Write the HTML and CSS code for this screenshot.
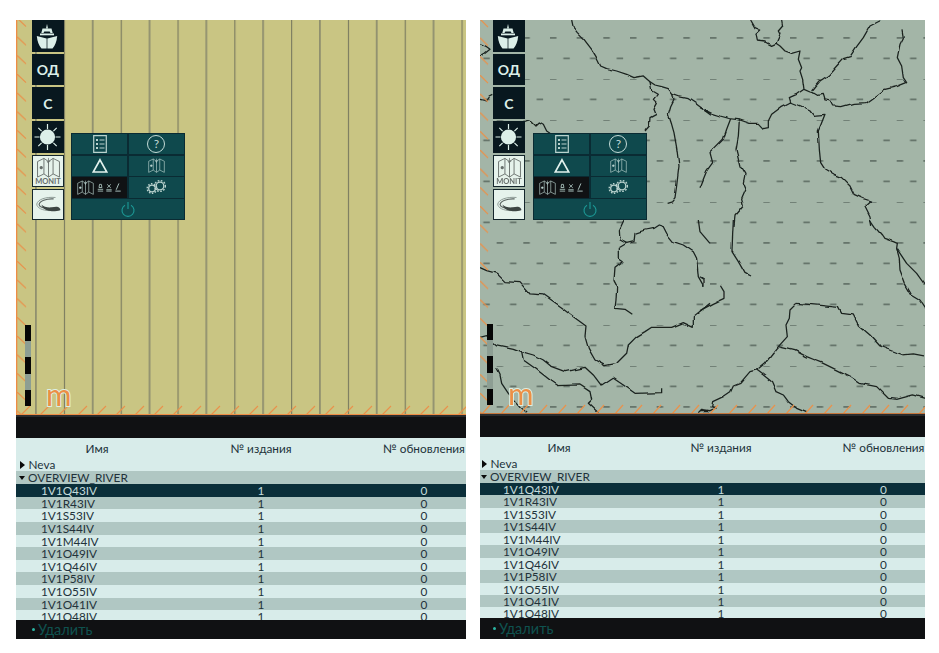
FILE: index.html
```html
<!DOCTYPE html>
<html>
<head>
<title>Monitoring</title>
<link rel="stylesheet" href="styles.css">
</head>
<body>
<!-- shared icons -->
<svg class="defs">
    <symbol id="icoShip" viewBox="0 0 32 32">
        <path d="M14 8.500l1-4.500 1 4.500z" fill="currentColor"/>
        <path d="M10.500 8.500h9l1.200 4.500h-2.200l-.8-1.600h-5.400l-.8 1.600H9.300z" fill="currentColor"/>
        <path d="M8 13.500h14v1.800H8z" fill="currentColor"/>
        <path d="M4.800 16l9.800 2.600v10H9.500Q5.500 24 4.800 16z" fill="currentColor"/>
        <path d="M25.200 16l-9.800 2.600v10h5.100Q24.500 24 25.200 16z" fill="currentColor"/>
    </symbol>
    <symbol id="icoSun" viewBox="0 0 32 32">
        <circle cx="15.500" cy="16" r="7.600" fill="currentColor"/>
        <path d="M15.500 3v5M15.500 24v5M2.500 16h5M23.500 16h5M6.300 6.800l3.300 3.300M21.400 21.900l3.300 3.300M24.700 6.800l-3.300 3.300M9.600 21.900l-3.300 3.300" stroke="currentColor" stroke-width="1.200" fill="none"/>
    </symbol>
    <symbol id="icoMap" viewBox="0 0 26 23">
        <path d="M1 5l7-3.500 5 3.500 5-3.500 7 3.500v17l-7-3.500-5 3.500-5-3.500-7 3.500z M8 1.500v17 M13 5v17 M18 1.500v17" fill="none" stroke="currentColor" stroke-width="1"/>
        <path d="M5 13.500a1.800 1.800 0 1 1 .1 0l-1.800 3.500z" fill="currentColor"/>
        <path d="M13 1v6l-1.500-2h3l-1.500-2" fill="none" stroke="currentColor" stroke-width=".8"/>
    </symbol>
    <symbol id="icoCurve" viewBox="0 0 32 32">
        <path d="M24 8C14 7 5 10 4 15c0 4 6 7 14 7" fill="none" stroke="#8a9792" stroke-width="1"/>
        <path d="M22 9.500C14 9 7 12 6.500 15.500c.5 2.500 5 4.500 11 4.500" fill="none" stroke="#5a6461" stroke-width="1.200"/>
        <path d="M9 15.500c2 2.500 7 3.500 11 3 3-.5 6-1.500 8 .5 1 1 1.500 2 1 2.500-3 1-7 1.500-10.500 1-5-.5-8.500-3-9.500-7z" fill="#3d4643"/>
    </symbol>
    <symbol id="icoList" viewBox="0 0 14 18">
        <path d="M.7.7h12.600v16.600H.7z" fill="none" stroke="currentColor" stroke-width="1.200"/>
        <path d="M3 4h2v2H3zM3 8h2v2H3zM3 12h2v2H3zM6.500 4.500h5v1h-5zM6.500 8.500h5v1h-5zM6.500 12.500h5v1h-5z" fill="currentColor"/>
    </symbol>
    <symbol id="icoTriangle" viewBox="0 0 16 15">
        <path d="M8 1.800L14.800 14H1.200z" fill="none" stroke="currentColor" stroke-width="1.700"/>
    </symbol>
    <symbol id="icoGears" viewBox="0 0 20 14">
        <circle cx="6" cy="8.500" r="3.300" fill="none" stroke="currentColor" stroke-width="1.300"/>
        <circle cx="6" cy="8.500" r="4.800" fill="none" stroke="currentColor" stroke-width="1.400" stroke-dasharray="1.500 1.500"/>
        <circle cx="14" cy="6" r="3.800" fill="none" stroke="currentColor" stroke-width="1.300"/>
        <circle cx="14" cy="6" r="5.400" fill="none" stroke="currentColor" stroke-width="1.400" stroke-dasharray="1.700 1.500"/>
    </symbol>
    <symbol id="icoTools" viewBox="0 0 26 10">
        <path d="M2.500 1.500h2l.6 3.500H1.900zM.5 7h6M.5 9h6" fill="none" stroke="currentColor" stroke-width=".9"/>
        <path d="M11 1.500l4 4M15 1.500l-4 4M10 7.500h6M10 9h6" fill="none" stroke="currentColor" stroke-width=".9"/>
        <path d="M24 .5l-3 7M20 9h6" fill="none" stroke="currentColor" stroke-width="1"/>
    </symbol>
</svg>

<div class="panel panelLeft">
    <div class="map">
        <svg class="mapPic" viewBox="16 20 450 395">
            <defs>
                <pattern id="gridL" patternUnits="userSpaceOnUse" x="35" y="0" width="56.800" height="40">
                    <rect x="0" y="0" width="1.800" height="40" fill="#90906f"/>
                    <rect x="29" y="0" width="1" height="40" fill="#70715b"/>
                </pattern>
                <pattern id="sideL" patternUnits="userSpaceOnUse" x="16" y="18" width="12" height="18.700">
                    <path d="M1 0l9 8.500" stroke="#e8924c" stroke-width="1.300"/>
                </pattern>
                <pattern id="footL" patternUnits="userSpaceOnUse" x="1" y="405" width="19" height="10">
                    <path d="M1 10l9-9" stroke="#e8924c" stroke-width="1.300"/>
                </pattern>
            </defs>
            <rect x="16" y="20" width="450" height="395" fill="url(#gridL)"/>
            <rect x="16" y="20" width="12" height="395" fill="url(#sideL)"/>
            <rect x="16" y="405" width="450" height="10" fill="url(#footL)"/>
            <rect x="16" y="20" width="1.300" height="395" fill="#ee8d45"/>
            <rect x="16" y="414" width="450" height="1.200" fill="#ee8d45"/>
        </svg>
        <div class="sideBar">
            <div class="sideBtn"><svg class="ico32"><use href="#icoShip"/></svg></div>
            <div class="sideBtn">ОД</div>
            <div class="sideBtn">С</div>
            <div class="sideBtn"><svg class="ico32"><use href="#icoSun"/></svg></div>
            <div class="sideBtn sideBtnPale"><svg class="icoMonit"><use href="#icoMap"/></svg><span class="monitLbl">MONIT</span></div>
            <div class="sideBtn sideBtnPale"><svg class="ico32"><use href="#icoCurve"/></svg></div>
        </div>
        <div class="popMenu">
            <div class="popCell"><svg class="icoList"><use href="#icoList"/></svg></div>
            <div class="popCell"><span class="qMark">?</span></div>
            <div class="popCell"><svg class="icoTriangle"><use href="#icoTriangle"/></svg></div>
            <div class="popCell"><svg class="icoMapSm"><use href="#icoMap"/></svg></div>
            <div class="popCell popCellBlack"><svg class="icoMapSm"><use href="#icoMap"/></svg><svg class="icoTools"><use href="#icoTools"/></svg></div>
            <div class="popCell"><svg class="icoGears"><use href="#icoGears"/></svg></div>
            <div class="popCell popCellWide"><svg class="icoPower" viewBox="0 0 14 16"><path d="M4 4.200a6 6 0 1 0 6 0M7 1v7" fill="none" stroke="currentColor" stroke-width="1.100"/></svg></div>
        </div>
        <div class="scaleBar"><i></i><i></i><i></i><i></i><i></i></div>
        <div class="logoM">m</div>
    </div>
    <div class="blackBar"></div>
    <div class="listBox">
        <div class="row rowHead"><span>Имя</span><span>№ издания</span><span>№ обновления</span></div>
        <div class="row rowGroup"><span class="arrowR"></span>Neva</div>
        <div class="row rowGroup rowDark"><span class="arrowD"></span>OVERVIEW_RIVER</div>
        <div class="row rowSel"><span>1V1Q43IV</span><span>1</span><span>0</span></div>
        <div class="row rowDark"><span>1V1R43IV</span><span>1</span><span>0</span></div>
        <div class="row"><span>1V1S53IV</span><span>1</span><span>0</span></div>
        <div class="row rowDark"><span>1V1S44IV</span><span>1</span><span>0</span></div>
        <div class="row"><span>1V1M44IV</span><span>1</span><span>0</span></div>
        <div class="row rowDark"><span>1V1O49IV</span><span>1</span><span>0</span></div>
        <div class="row"><span>1V1Q46IV</span><span>1</span><span>0</span></div>
        <div class="row rowDark"><span>1V1P58IV</span><span>1</span><span>0</span></div>
        <div class="row"><span>1V1O55IV</span><span>1</span><span>0</span></div>
        <div class="row rowDark"><span>1V1O41IV</span><span>1</span><span>0</span></div>
        <div class="row"><span>1V1O48IV</span><span>1</span><span>0</span></div>
    </div>
    <div class="footBar"><span class="footDot"></span>Удалить</div>
</div>

<div class="panel panelRight">
    <div class="map">
        <svg class="mapPic" viewBox="480 20 445 394">
            <defs>
                <pattern id="dash" patternUnits="userSpaceOnUse" x="710" y="37" width="26.670" height="41">
                    <rect x="0" y="0" width="6.500" height="1.800" fill="#66756b"/>
                    <rect x="13.330" y="20.500" width="6.500" height="1.800" fill="#66756b"/>
                </pattern>
                <pattern id="sideR" patternUnits="userSpaceOnUse" x="480" y="19" width="10" height="18.700">
                    <path d="M0 0l8 8" stroke="#e8924c" stroke-width="1.300"/>
                </pattern>
                <pattern id="footR" patternUnits="userSpaceOnUse" x="482" y="404" width="19" height="10">
                    <path d="M0 10l8-9" stroke="#e8924c" stroke-width="1.300"/>
                </pattern>
                <filter id="wobble" filterUnits="userSpaceOnUse" x="480" y="20" width="445" height="394">
                    <feTurbulence type="fractalNoise" baseFrequency=".09" numOctaves="1" seed="4" result="noise"/>
                    <feDisplacementMap in="SourceGraphic" in2="noise" scale="4" xChannelSelector="R" yChannelSelector="G"/>
                </filter>
            </defs>
            <rect x="480" y="20" width="445" height="394" fill="url(#dash)"/>
            <g class="rivers" filter="url(#wobble)">
                <g transform="translate(480 16) scale(.3333)">
                    <path d="M275 12L280 35 292 50 312 70 335 100 350 125 362 150 380 158 410 165 440 175 462 185 490 180 510 197 525 207 545 212 565 218 578 235 582 250 572 270 565 295 575 325 582 350 590 395 597 450 590 510 585 545 575 558 560 562"/>
                    <path d="M510 197L515 225 532 235 520 250 532 262 522 280 528 295 510 305 508 330 495 345"/>
                    <path d="M578 235L600 243 625 248 650 265 670 280 690 295"/>
                    <path d="M0 83L20 92 30 100 15 112 0 120"/>
                    <path d="M0 250L20 255 30 240 40 235"/>
                    <path d="M135 320L150 315 165 330 178 318 190 325 200 345 210 352"/>
                </g>
                <g transform="translate(700 16) scale(.3333)">
                    <path d="M152 12L165 35 182 42 168 55 172 75 195 78 215 88 228 82 240 90 255 105 275 112 300 105 295 130 305 155 300 165 308 190 312 220 330 228 345 232 355 238 370 235 375 252 390 255 398 270 425 272 460 262 500 260 525 242 555 220 590 212 620 200 610 185 605 150 592 125 600 85 610 65 606 40"/>
                    <path d="M245 12L248 30 235 45 240 55 228 82"/>
                    <path d="M312 220L290 235 268 245 272 258 245 272 215 295 205 315 205 335 190 338 175 322 150 322 120 312 90 308 60 300 35 292 10 280 0 275"/>
                    <path d="M270 258L300 270 330 285 340 298 375 295 365 320 355 345 358 400 362 440 375 460 400 475 425 485 450 510 462 535 490 548 512 555 495 570 510 600 515 630"/>
                    <path d="M335 225L360 195 385 178 410 150 430 128 450 122 470 92 490 65 510 30 545 12"/>
                    <path d="M92 308L80 340 70 370 45 395 30 410 38 440 20 465 10 490 0 515"/>
                    <path d="M118 312L115 360 108 400 120 450 135 475 130 500 138 520 125 550 130 570 105 600 102 630"/>
                </g>
                <g transform="translate(480 220) scale(.3333)">
                    <path d="M432 0L418 30 420 60 440 70 415 85 415 115 430 125 405 145 402 185 410 200 408 240 405 265 435 268 457 283"/>
                    <path d="M440 70L462 65 465 40 495 30 520 25 535 15 550 20 560 40 580 65 610 75 640 95 650 115 655 170 672 200"/>
                    <path d="M0 143L20 152 50 160 75 185 120 188 150 222 190 225 240 260 280 290 318 318 315 350 325 385 345 420 375 437 410 430 440 400 445 375 470 350 495 335 515 322 575 322 610 308 640 322 640 290 690 250"/>
                    <path d="M0 355L20 350 50 375 100 385 125 395 160 405 190 420 215 440 255 455 315 442 340 465 365 498 400 475 430 495 465 520 545 518 545 505"/>
                    <path d="M125 395L130 420 165 445 210 480 235 497 300 495 330 515 335 540 325 550 355 578"/>
                    <path d="M50 445L60 465 65 490 85 520 120 560 140 578"/>
                    <path d="M655 578L665 568 690 572"/>
                    <path d="M655 0L660 35 690 70"/>
                </g>
                <g transform="translate(700 220) scale(.3333)">
                    <path d="M100 0L98 40 96 95 115 125 135 160 150 168"/>
                    <path d="M510 0L525 22 545 45 552 55 580 65 592 70 590 85 600 100 620 130 650 160 677 198"/>
                    <path d="M590 85L598 115 600 150 615 190 635 225 660 240 677 265"/>
                    <path d="M0 170L12 178 12 200"/>
                    <path d="M60 195L72 215 72 235 40 250 0 272"/>
                    <path d="M290 250L270 270 268 295 258 315 262 350 235 380 215 405 195 430 170 450 150 455 120 490 100 498 92 515 70 530 38 545 35 560 45 565 30 572 0 572"/>
                    <path d="M235 380L285 392 320 410 345 420 365 428 420 455 450 470 480 490 530 500 565 535 590 538 640 525 677 535"/>
                    <path d="M290 250L360 256 415 262 425 280 460 285 475 315 510 345 540 378 610 405 640 402 672 408"/>
                    <path d="M170 450L190 465 215 485 228 515 250 525 265 545 290 565 320 578"/>
                </g>
            </g>
            <rect x="480" y="20" width="10" height="394" fill="url(#sideR)"/>
            <rect x="480" y="404" width="445" height="10" fill="url(#footR)"/>
            <rect x="480" y="413" width="445" height="1" fill="#c4763c"/>
        </svg>
        <div class="sideBar">
            <div class="sideBtn"><svg class="ico32"><use href="#icoShip"/></svg></div>
            <div class="sideBtn">ОД</div>
            <div class="sideBtn">С</div>
            <div class="sideBtn"><svg class="ico32"><use href="#icoSun"/></svg></div>
            <div class="sideBtn sideBtnPale"><svg class="icoMonit"><use href="#icoMap"/></svg><span class="monitLbl">MONIT</span></div>
            <div class="sideBtn sideBtnPale"><svg class="ico32"><use href="#icoCurve"/></svg></div>
        </div>
        <div class="popMenu">
            <div class="popCell"><svg class="icoList"><use href="#icoList"/></svg></div>
            <div class="popCell"><span class="qMark">?</span></div>
            <div class="popCell"><svg class="icoTriangle"><use href="#icoTriangle"/></svg></div>
            <div class="popCell"><svg class="icoMapSm"><use href="#icoMap"/></svg></div>
            <div class="popCell popCellBlack"><svg class="icoMapSm"><use href="#icoMap"/></svg><svg class="icoTools"><use href="#icoTools"/></svg></div>
            <div class="popCell"><svg class="icoGears"><use href="#icoGears"/></svg></div>
            <div class="popCell popCellWide"><svg class="icoPower" viewBox="0 0 14 16"><path d="M4 4.200a6 6 0 1 0 6 0M7 1v7" fill="none" stroke="currentColor" stroke-width="1.100"/></svg></div>
        </div>
        <div class="scaleBar"><i></i><i></i><i></i><i></i><i></i></div>
        <div class="logoM">m</div>
    </div>
    <div class="blackBar"></div>
    <div class="listBox">
        <div class="row rowHead"><span>Имя</span><span>№ издания</span><span>№ обновления</span></div>
        <div class="row rowGroup"><span class="arrowR"></span>Neva</div>
        <div class="row rowGroup rowDark"><span class="arrowD"></span>OVERVIEW_RIVER</div>
        <div class="row rowSel"><span>1V1Q43IV</span><span>1</span><span>0</span></div>
        <div class="row rowDark"><span>1V1R43IV</span><span>1</span><span>0</span></div>
        <div class="row"><span>1V1S53IV</span><span>1</span><span>0</span></div>
        <div class="row rowDark"><span>1V1S44IV</span><span>1</span><span>0</span></div>
        <div class="row"><span>1V1M44IV</span><span>1</span><span>0</span></div>
        <div class="row rowDark"><span>1V1O49IV</span><span>1</span><span>0</span></div>
        <div class="row"><span>1V1Q46IV</span><span>1</span><span>0</span></div>
        <div class="row rowDark"><span>1V1P58IV</span><span>1</span><span>0</span></div>
        <div class="row"><span>1V1O55IV</span><span>1</span><span>0</span></div>
        <div class="row rowDark"><span>1V1O41IV</span><span>1</span><span>0</span></div>
        <div class="row"><span>1V1O48IV</span><span>1</span><span>0</span></div>
    </div>
    <div class="footBar"><span class="footDot"></span>Удалить</div>
</div>
</body>
</html>
```

FILE: styles.css
```css
html, body {
    margin: 0;
    background-color: white;
}
body {
    display: flex;
    gap: 14px;
    align-items: flex-start;
    padding: 20px 0 0 16px;
    font-family: Lato, "Noto Sans", sans-serif;
    font-size: 11.8px;
    color: #22323a;
}
.defs {
    position: absolute;
    width: 0;
    height: 0;
}
.panel {
    display: flex;
    flex-direction: column;
    height: 619px;
}
.panelLeft {
    width: 450px;
    --map-h: 395px;
    --map-bg: #c9c583;
    --row-h: 12.65px;
    --name-w: 162px;
    --name-pad: 25px;
    --group-pad: 4px;
    --side-x: 16px;
    --menu-x: 55px;
    --scale-x: 9px;
    --scale-y: 305px;
    --logo-x: 30px;
    --foot-h: 19px;
    --foot-pad: 16px;
}
.panelRight {
    width: 445px;
    --map-h: 394px;
    --map-bg: #a3b5a7;
    --row-h: 12.45px;
    --name-w: 158px;
    --name-pad: 23px;
    --group-pad: 2px;
    --side-x: 13px;
    --menu-x: 53px;
    --scale-x: 7px;
    --scale-y: 304px;
    --logo-x: 28px;
    --foot-h: 21px;
    --foot-pad: 13px;
}

/* map */
.map {
    position: relative;
    height: var(--map-h);
    flex: none;
    background-color: var(--map-bg);
    overflow: hidden;
}
.mapPic {
    display: block;
    width: 100%;
    height: 100%;
}
.rivers path {
    fill: none;
    stroke: #1a211e;
    stroke-width: 3.800;
    stroke-linejoin: round;
}
.sideBar {
    position: absolute;
    left: var(--side-x);
    top: 0;
    width: 32px;
    display: flex;
    flex-direction: column;
    gap: 2.050px;
}
.sideBtn {
    height: 31.700px;
    background-color: #08181f;
    color: #dcefe9;
    font-weight: bold;
    font-size: 14px;
    display: flex;
    flex-direction: column;
    align-items: center;
    justify-content: center;
}
.sideBtnPale {
    box-sizing: border-box;
    background-color: #e6f3ec;
    border: 1px solid #14262c;
    color: #666e6b;
}
.ico32 {
    width: 32px;
    height: 32px;
    flex: none;
}
.sideBtnPale .ico32 {
    width: 30px;
    height: 30px;
}
.icoMonit {
    width: 25px;
    height: 21px;
    margin-top: 1px;
    flex: none;
}
.monitLbl {
    font-size: 7.500px;
    line-height: 7px;
    font-weight: bold;
}

/* pop-up menu */
.popMenu {
    position: absolute;
    left: var(--menu-x);
    top: 113px;
    width: 114px;
    box-sizing: border-box;
    padding: 1px;
    background-color: #0a2b33;
    display: grid;
    grid-template-columns: 1fr 1fr;
    grid-auto-rows: 20.200px;
    gap: 1.500px;
}
.popCell {
    background-color: #0f494d;
    color: #b9d2ce;
    display: flex;
    align-items: center;
    justify-content: center;
}
.popCellBlack {
    background-color: #101214;
    gap: 2px;
}
.popCellWide {
    grid-column: span 2;
    color: #1d9a97;
}
.icoList {
    width: 14px;
    height: 18px;
}
.qMark {
    box-sizing: border-box;
    width: 18px;
    height: 18px;
    border: 1px solid #c4dbd7;
    border-radius: 50%;
    font-size: 12px;
    line-height: 16px;
    text-align: center;
    color: #c4dbd7;
}
.icoTriangle {
    width: 16px;
    height: 15px;
    color: #e3f2ee;
}
.icoMapSm {
    width: 17px;
    height: 15px;
    flex: none;
}
.icoTools {
    width: 26px;
    height: 9px;
    flex: none;
}
.icoGears {
    width: 20px;
    height: 14px;
}
.icoPower {
    width: 14px;
    height: 16px;
}
.scaleBar {
    position: absolute;
    left: var(--scale-x);
    top: var(--scale-y);
    width: 5.500px;
    display: flex;
    flex-direction: column;
}
.scaleBar i {
    display: block;
    height: 16.200px;
    background-color: #060606;
}
.scaleBar i:nth-child(even) {
    background-color: #8d9e93;
}
.logoM {
    position: absolute;
    left: var(--logo-x);
    bottom: 3px;
    font-size: 31px;
    line-height: 36px;
    color: #ec8f45;
    -webkit-text-stroke: 2px #dcefe3;
    paint-order: stroke fill;
}

/* bars */
.blackBar {
    flex: none;
    height: 23px;
    box-sizing: border-box;
    background-color: #101113;
    border-top: 2px solid #2a2c2e;
}
.footBar {
    flex: none;
    height: var(--foot-h);
    background-color: #101113;
    color: #0f524f;
    font-size: 14.500px;
    line-height: 20px;
    display: flex;
    align-items: center;
    padding-left: var(--foot-pad);
}
.footDot {
    width: 3px;
    height: 3px;
    border-radius: 50%;
    background-color: #2bb5a3;
    margin-right: 3px;
}

/* list */
.listBox {
    flex: 1;
    min-height: 0;
    overflow: hidden;
    background-color: #d8ecea;
}
.row {
    display: grid;
    grid-template-columns: var(--name-w) 166px 1fr;
    height: var(--row-h);
    line-height: calc(var(--row-h) + 1px);
    white-space: nowrap;
    text-align: center;
}
.row > span:first-child {
    text-align: left;
    padding-left: var(--name-pad);
}
.row > span:nth-child(3) {
    padding-left: 38px;
}
.rowHead {
    height: 20px;
    line-height: 22px;
}
.rowHead > span:first-child {
    text-align: center;
    padding-left: 0;
}
.rowDark {
    background-color: #b0c7c3;
}
.rowSel {
    background-color: #0b2f3a;
    color: #c5dcdc;
}
.rowGroup {
    display: flex;
    align-items: center;
    height: 13px;
    padding-left: var(--group-pad);
}
.rowGroup > span:first-child {
    padding-left: 0;
}
.arrowR {
    border-left: 5.500px solid #0a0a0a;
    border-top: 4.500px solid transparent;
    border-bottom: 4.500px solid transparent;
    margin-right: 3.500px;
}
.arrowD {
    border-top: 4.500px solid #0a0a0a;
    border-left: 3.500px solid transparent;
    border-right: 3.500px solid transparent;
    margin-left: -1px;
    margin-right: 3px;
}
```
